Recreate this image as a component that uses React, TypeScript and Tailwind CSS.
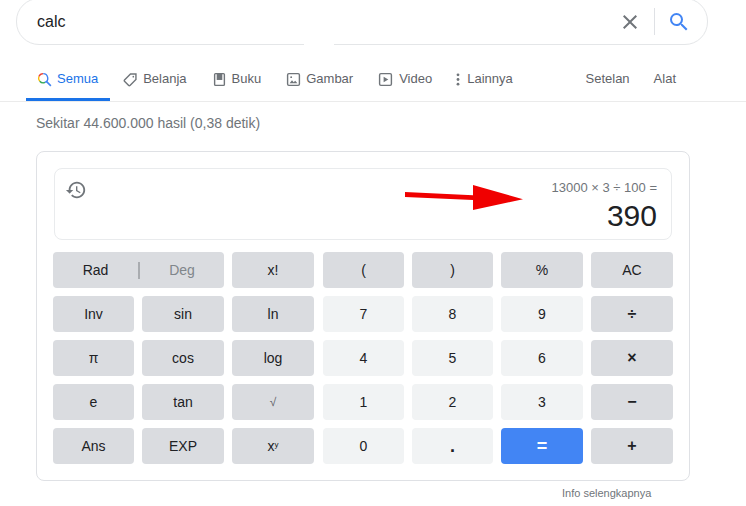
const tabIcon = 'w-[15px] h-[15px] shrink-0'

const SearchColor = () => (
  <svg viewBox="0 0 16 16" className="w-[15px] h-[15px] shrink-0" fill="none" strokeWidth="1.5">
    <path d="M6.6 1.7a4.9 4.9 0 0 0-4.6 3.2" stroke="#ea4335" />
    <path d="M2 4.9a4.9 4.9 0 0 0 .9 4.9" stroke="#fbbc05" />
    <path d="M2.9 9.8a4.9 4.9 0 0 0 5.6 1.3" stroke="#34a853" />
    <path d="M6.6 1.7a4.9 4.9 0 0 1 1.9 9.4" stroke="#4285f4" />
    <path d="M10 10l4.8 4.8" stroke="#4285f4" strokeWidth="1.7" />
  </svg>
)

const Tab = ({ label, icon, active, gap = 'gap-[5px]' }: { label: string; icon?: React.ReactNode; active?: boolean; gap?: string }) => (
  <div className={`flex items-center ${gap} ${active ? 'text-[#1a73e8]' : 'text-[#5f6368]'}`}>
    {icon}
    <span>{label}</span>
  </div>
)

const Btn = ({ children, kind = 'dark', className = '' }: { children: React.ReactNode; kind?: 'dark' | 'light' | 'blue'; className?: string }) => {
  const tone =
    kind === 'blue'
      ? 'bg-[#4285f4] text-white font-bold'
      : kind === 'light'
        ? 'bg-[#f1f3f4] text-[#202124]'
        : 'bg-[#dadce0] text-[#202124]'
  return (
    <div className={`h-9 rounded-[4px] flex items-center justify-center text-[14px] ${tone} ${className}`}>
      {children}
    </div>
  )
}

export default function App() {
  return (
    <div className="w-[746px] h-[506px] overflow-hidden bg-white text-[#202124] font-['Liberation_Sans',Arial,sans-serif]">
      {/* search box, top edge is cut off by the screenshot */}
      <div className="relative ml-4 w-[692px] h-[47px] -mt-0.5 rounded-[23px] border border-[#e4e6e8] flex items-center pl-5 pr-4">
        <span className="text-[16px] flex-1 leading-none">calc</span>
        <svg viewBox="0 0 24 24" className="w-6 h-6 fill-[#70757a]">
          <path d="M19 6.41L17.59 5 12 10.59 6.41 5 5 6.41 10.59 12 5 17.59 6.41 19 12 13.41 17.59 19 19 17.59 13.41 12z" />
        </svg>
        <div className="w-px h-[27px] bg-[#dfe1e5] mx-3" />
        <svg viewBox="0 0 24 24" className="w-6 h-6 fill-[#4285f4]">
          <path d="M15.5 14h-.79l-.28-.27A6.471 6.471 0 0 0 16 9.5 6.5 6.5 0 1 0 9.5 16c1.61 0 3.09-.59 4.23-1.57l.27.28v.79l5 4.99L20.49 19l-4.99-5zm-6 0C7.01 14 5 11.99 5 9.5S7.01 5 9.5 5 14 7.01 14 9.5 11.99 14 9.5 14z" />
        </svg>
        <div className="absolute left-[287px] -bottom-px w-[30px] h-[2px] bg-white" />
      </div>

      {/* tabs */}
      <div className="relative mt-[12px] h-[45px] border-b border-[#ebebeb] flex items-center pl-[37px] text-[13px]">
        <Tab active label="Semua" icon={<SearchColor />} />
        <div className="absolute left-[26px] bottom-0 w-[84px] h-[3px] bg-[#1a73e8]" />
        <div className="ml-[25px]">
          <Tab
            label="Belanja"
            icon={
              <svg viewBox="0 0 16 16" className={tabIcon} fill="none" stroke="#70757a" strokeWidth="1.5">
                <path d="M1.6 8.6L8 2.2h5.8V8l-6.4 6.4a.9.9 0 0 1-1.3 0L1.6 9.9a.9.9 0 0 1 0-1.3z" />
                <circle cx="11" cy="5" r="0.9" fill="#70757a" stroke="none" />
              </svg>
            }
          />
        </div>
        <div className="ml-[25px]">
          <Tab
            label="Buku"
            icon={
              <svg viewBox="0 0 16 16" className={tabIcon} fill="none" stroke="#70757a" strokeWidth="1.5">
                <rect x="2.8" y="1.7" width="10.4" height="12.6" rx="1" />
                <path d="M5 1.7h6v6.8H5z" fill="#70757a" stroke="none" />
              </svg>
            }
          />
        </div>
        <div className="ml-[25px]">
          <Tab
            label="Gambar"
            icon={
              <svg viewBox="0 0 16 16" className={tabIcon} fill="none" stroke="#70757a" strokeWidth="1.5">
                <rect x="1.7" y="1.7" width="12.6" height="12.6" rx="1.4" />
                <path d="M3.8 12l2.6-3.2 1.8 2.2 1.6-1.8 2.4 2.8z" fill="#70757a" stroke="none" />
                <circle cx="5.5" cy="5.5" r="1" fill="#70757a" stroke="none" />
              </svg>
            }
          />
        </div>
        <div className="ml-[25px]">
          <Tab
            label="Video"
            gap="gap-[6px]"
            icon={
              <svg viewBox="0 0 16 16" className={tabIcon} fill="none" stroke="#70757a" strokeWidth="1.5">
                <rect x="1.7" y="1.7" width="12.6" height="12.6" rx="1.4" />
                <path d="M6 5l5 3-5 3z" fill="#70757a" stroke="none" />
              </svg>
            }
          />
        </div>
        <div className="ml-[24px]">
          <Tab
            label="Lainnya"
            gap="gap-[7px]"
            icon={
              <svg viewBox="0 0 4 16" className="w-1 h-[15px] shrink-0 fill-[#70757a]">
                <circle cx="2" cy="3" r="1.5" />
                <circle cx="2" cy="8" r="1.5" />
                <circle cx="2" cy="13" r="1.5" />
              </svg>
            }
          />
        </div>
        <div className="ml-auto mr-[70px] flex gap-6 text-[#5f6368]">
          <span>Setelan</span>
          <span>Alat</span>
        </div>
      </div>

      <p className="ml-9 mt-[12px] text-[14px] leading-[18px] text-[#70757a]">Sekitar 44.600.000 hasil (0,38 detik)</p>

      {/* calculator card */}
      <div className="ml-9 mt-[19px] w-[654px] h-[330px] rounded-[8px] border border-[#dfe1e5] pt-4 pl-4 pr-4">
        <div className="relative ml-px w-[618px] h-[72px] rounded-[8px] border border-[#e9ebed] flex flex-col items-end pr-[14px] pt-[11px]">
          <svg viewBox="0 0 24 24" className="absolute left-[10px] top-[10px] w-[22px] h-[22px] fill-[#70757a]">
            <path d="M13 3c-4.97 0-9 4.03-9 9H1l3.89 3.89.07.14L9 12H6c0-3.87 3.13-7 7-7s7 3.13 7 7-3.13 7-7 7c-1.93 0-3.68-.79-4.94-2.06l-1.42 1.42C8.27 19.99 10.51 21 13 21c4.97 0 9-4.03 9-9s-4.03-9-9-9zm-1 5v5l4.28 2.54.72-1.21-3.5-2.08V8H12z" />
          </svg>
          <svg viewBox="0 0 120 28" className="absolute left-[349px] top-[15px] w-[120px] h-[28px] fill-[#f00000]">
            <path d="M1 8l68 3.3V1l50 14.3L69 26V16L1 13z" />
          </svg>
          <span className="text-[13px] leading-[16px] text-[#70757a]">13000 × 3 ÷ 100 =</span>
          <span className="text-[30px] leading-[34px] mt-[3px] text-[#202124]">390</span>
        </div>

        <div className="grid grid-cols-[81px_82px_82px_82px_81px_82px_82px] gap-x-2 gap-y-2 mt-3 w-[620px]">
          <Btn className="col-span-2 relative">
            <div className="flex w-full items-center">
              <span className="w-[85px] text-center">Rad</span>
              <span className="h-[17px] w-0.5 bg-[#a9acb0]" />
              <span className="flex-1 text-center text-[#80868b]">Deg</span>
            </div>
          </Btn>
          <Btn>x!</Btn>
          <Btn className="ml-px">(</Btn>
          <Btn>)</Btn>
          <Btn>%</Btn>
          <Btn>AC</Btn>

          <Btn>Inv</Btn>
          <Btn>sin</Btn>
          <Btn>ln</Btn>
          <Btn kind="light" className="ml-px">7</Btn>
          <Btn kind="light">8</Btn>
          <Btn kind="light">9</Btn>
          <Btn><span className="font-bold text-[16px]">÷</span></Btn>

          <Btn>π</Btn>
          <Btn>cos</Btn>
          <Btn>log</Btn>
          <Btn kind="light" className="ml-px">4</Btn>
          <Btn kind="light">5</Btn>
          <Btn kind="light">6</Btn>
          <Btn><span className="font-bold text-[16px]">×</span></Btn>

          <Btn>e</Btn>
          <Btn>tan</Btn>
          <Btn><span className="text-[#5f6368] text-[12px]">√</span></Btn>
          <Btn kind="light" className="ml-px">1</Btn>
          <Btn kind="light">2</Btn>
          <Btn kind="light">3</Btn>
          <Btn><span className="font-bold text-[16px]">−</span></Btn>

          <Btn>Ans</Btn>
          <Btn>EXP</Btn>
          <Btn><span>x<sup className="text-[8px] top-[-4px]">y</sup></span></Btn>
          <Btn kind="light" className="ml-px">0</Btn>
          <Btn kind="light"><span className="font-bold text-[18px]">.</span></Btn>
          <Btn kind="blue"><span className="text-[18px]">=</span></Btn>
          <Btn><span className="font-bold text-[16px]">+</span></Btn>
        </div>
      </div>

      <p className="mt-[5px] ml-[562px] text-[11px] leading-[14px] text-[#70757a]">Info selengkapnya</p>
    </div>
  )
}
